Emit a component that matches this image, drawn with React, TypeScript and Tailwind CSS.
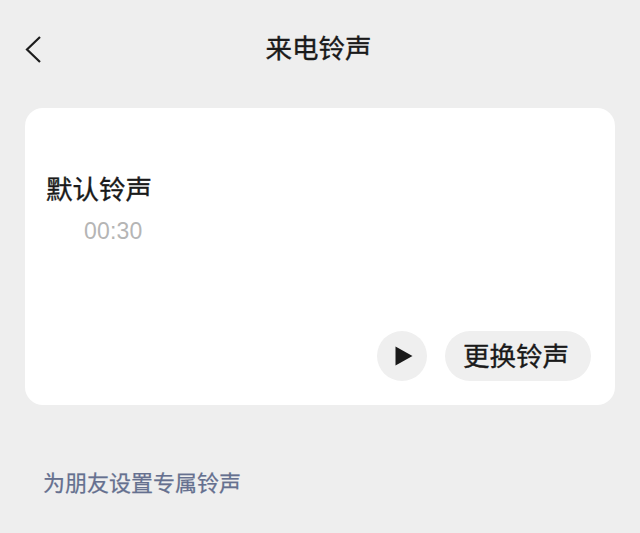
const CJK = 'font-["Noto_Sans_CJK_SC","Liberation_Sans",sans-serif]';

export default function App() {
  return (
    <div className={`flex h-[533px] w-[640px] flex-col overflow-hidden bg-[#eeeeee] ${CJK}`}>
      {/* Header */}
      <div className="relative flex h-[108px] items-start justify-center pt-[28px] pr-[3px]">
        <svg
          className="absolute left-[25px] top-[36px]"
          width="17"
          height="27"
          viewBox="0 0 17 27"
          fill="none"
          stroke="#1c1c1c"
          strokeWidth="2.2"
        >
          <path d="M15 1 L2 13.5 L15 26" />
        </svg>
        <h1 className="text-[26.5px] leading-[38px] font-normal text-[#1a1a1a] [-webkit-text-stroke:0.35px_#1a1a1a]">来电铃声</h1>
      </div>

      {/* Ringtone card */}
      <div className="mx-[25px] flex h-[297px] flex-col rounded-[18px] bg-white">
        <div className="pl-[21px] pt-[61px] text-[26.5px] leading-[38px] text-[#1a1a1a] [-webkit-text-stroke:0.35px_#1a1a1a]">默认铃声</div>
        <div className='pl-[59px] pt-[8px] font-["Liberation_Sans",sans-serif] text-[23px] leading-[32px] tracking-[0.2px] text-[#b5b5b5]'>
          00:30
        </div>
        <div className="mt-auto flex items-center justify-end gap-[18px] pb-[24px] pr-[24px]">
          <button className="flex h-[50px] w-[50px] items-center justify-center rounded-full bg-[#efefef]">
            <svg width="18" height="20" viewBox="0 0 18 20" className="ml-[4px]">
              <path d="M0.5 0.5 L17.5 10 L0.5 19.5 Z" fill="#1a1a1a" />
            </svg>
          </button>
          <button className="flex h-[50px] w-[146px] items-center justify-center rounded-full bg-[#efefef] pb-[3px] pr-[4px] text-[26.5px] text-[#1a1a1a] [-webkit-text-stroke:0.35px_#1a1a1a]">
            更换铃声
          </button>
        </div>
      </div>

      {/* Link */}
      <div className="pl-[43px] pt-[60px] text-[22px] leading-[32px] text-[#65708f] [-webkit-text-stroke:0.25px_#65708f]">为朋友设置专属铃声</div>
    </div>
  );
}
